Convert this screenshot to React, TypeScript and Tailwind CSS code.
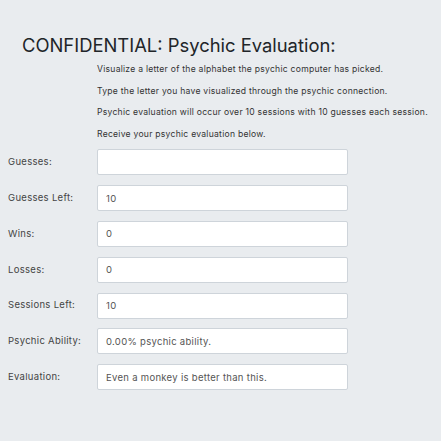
const intro = [
  'Visualize a letter of the alphabet the psychic computer has picked.',
  'Type the letter you have visualized through the psychic connection.',
  'Psychic evaluation will occur over 10 sessions with 10 guesses each session.',
  'Receive your psychic evaluation below.',
];

const fields = [
  { label: 'Guesses:', value: '' },
  { label: 'Guesses Left:', value: '10' },
  { label: 'Wins:', value: '0' },
  { label: 'Losses:', value: '0' },
  { label: 'Sessions Left:', value: '10' },
  { label: 'Psychic Ability:', value: '0.00% psychic ability.' },
  { label: 'Evaluation:', value: 'Even a monkey is better than this.' },
];

const App = () => {
  return (
    <main className="w-[441px] h-[441px] bg-[#e9ecef] font-['Inter','Liberation_Sans',sans-serif] text-[#212529] overflow-hidden">
      <h1 className="pl-[22px] pt-[33px] text-[18.4px] leading-[24px] font-normal">
        CONFIDENTIAL: Psychic Evaluation:
      </h1>
      <div className="pl-[97px] pt-[2px] flex flex-col">
        {intro.map((line) => (
          <p key={line} className="text-[8.6px] leading-[21.6px] tracking-[0.25px] text-[#333]">
            {line}
          </p>
        ))}
      </div>
      <div className="flex flex-col gap-[9.8px] pt-[4px]">
        {fields.map((field) => (
          <div key={field.label} className="flex items-center h-[26px]">
            <label className="w-[97px] pl-[8px] text-[9.5px] tracking-[0.3px] text-[#444]">{field.label}</label>
            <input
              readOnly
              value={field.value}
              className="w-[251px] h-[26px] px-[8px] bg-white border border-[#ced4da] rounded-[2px] text-[9.5px] tracking-[0.3px] text-[#555] outline-none"
            />
          </div>
        ))}
      </div>
    </main>
  );
};

export default App;
